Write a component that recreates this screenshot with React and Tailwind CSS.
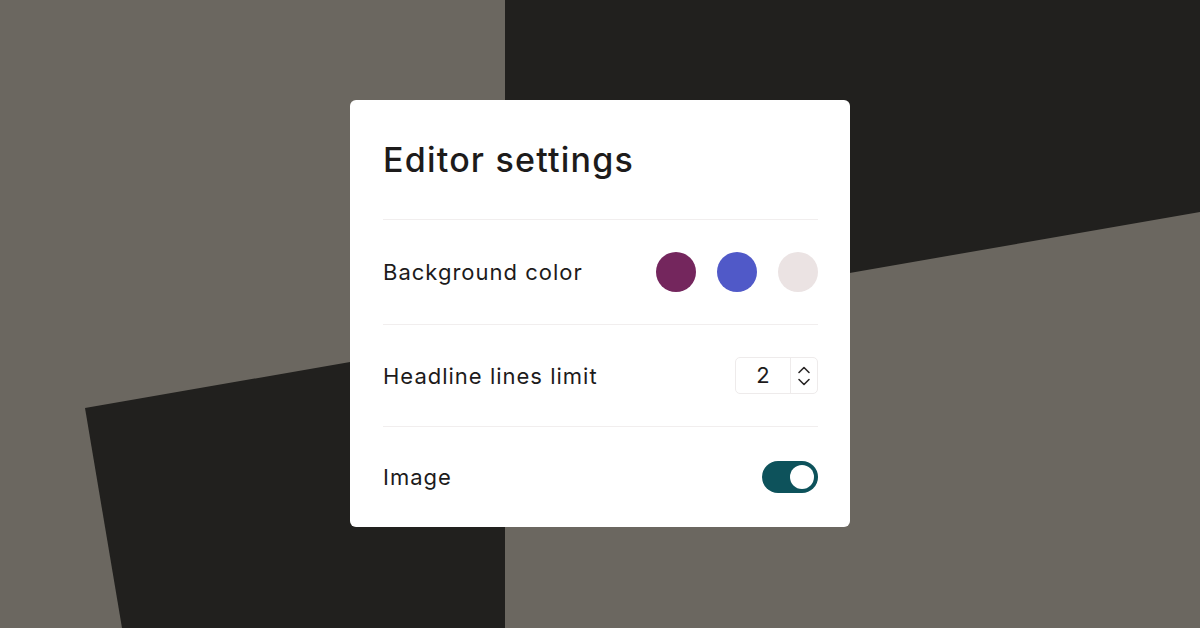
import React from "react";

function Chevrons() {
  return (
    <svg width="14" height="26" viewBox="0 0 14 26" fill="none" stroke="#2a2727" strokeWidth="1.6" strokeLinecap="round" strokeLinejoin="round">
      <path d="M2 9.5 L7 4.5 L12 9.5" />
      <path d="M2 16.5 L7 21.5 L12 16.5" />
    </svg>
  );
}

export default function App() {
  return (
    <div className="relative w-[1200px] h-[628px] overflow-hidden bg-[#6b6760]" style={{ fontFamily: "Inter, 'Noto Sans', sans-serif" }}>
      <svg className="absolute inset-0" width="1200" height="628" viewBox="0 0 1200 628">
        <polygon points="505,0 1200,0 1200,212 505,333" fill="#21201e" />
        <polygon points="85,408 505,335 505,628 122,628" fill="#21201e" />
      </svg>
      <div className="relative flex w-full h-full items-start justify-center pt-[100px]">
        <div className="w-[500px] h-[427px] bg-white rounded-[6px] pl-[33px] pr-[32px] flex flex-col text-[#1d1b1b]">
          <div className="h-[119px] flex items-center">
            <h1 className="text-[34px] font-medium tracking-[1.2px] leading-none">Editor settings</h1>
          </div>
          <div className="h-px bg-[#f1eeee]" />
          <div className="h-[104px] flex items-center justify-between">
            <span className="text-[22px] tracking-[1px] leading-none">Background color</span>
            <div className="flex items-center gap-[21px]">
              <div className="w-10 h-10 rounded-full bg-[#74265d]" />
              <div className="w-10 h-10 rounded-full bg-[#5059c8]" />
              <div className="w-10 h-10 rounded-full bg-[#ebe3e3]" />
            </div>
          </div>
          <div className="h-px bg-[#f1eeee]" />
          <div className="h-[101px] flex items-center justify-between">
            <span className="text-[22px] tracking-[1px] leading-none">Headline lines limit</span>
            <div className="flex h-[37px] w-[83px] border border-[#eeebeb] rounded-[5px]">
              <div className="w-[54px] flex items-center justify-center text-[22px]">2</div>
              <div className="w-px bg-[#eeebeb]" />
              <div className="flex-1 flex items-center justify-center"><Chevrons /></div>
            </div>
          </div>
          <div className="h-px bg-[#f1eeee]" />
          <div className="h-[100px] flex items-center justify-between">
            <span className="text-[22px] tracking-[1px] leading-none">Image</span>
            <div className="w-14 h-8 rounded-full bg-[#0d525b] flex items-center justify-end pr-1">
              <div className="w-6 h-6 rounded-full bg-white" />
            </div>
          </div>
        </div>
      </div>
    </div>
  );
}
